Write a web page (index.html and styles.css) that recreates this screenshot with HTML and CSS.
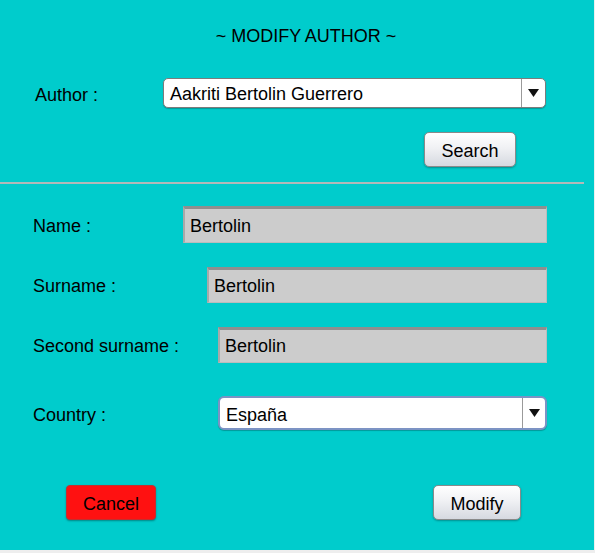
FILE: index.html
```html
<!DOCTYPE html>
<html lang="en">
<head>
<meta charset="utf-8">
<title>Modify author</title>
<link rel="stylesheet" href="styles.css">
</head>
<body>
<div class="frame">
  <div class="title">~ MODIFY AUTHOR ~</div>

  <div class="row row--author">
    <span class="label label--combo">Author :</span>
    <div class="combo combo--author">
      <span class="combo-text">Aakriti Bertolin Guerrero</span>
      <span class="combo-arrow"><svg width="11" height="8" viewBox="0 0 11 8"><polygon points="0,0 11,0 5.5,8" fill="#111"/></svg></span>
    </div>
  </div>

  <div class="row row--search">
    <button class="btn btn--search">Search</button>
  </div>

  <div class="separator"></div>

  <div class="row row--name">
    <span class="label">Name :</span>
    <div class="field field--name">Bertolin</div>
  </div>

  <div class="row row--surname">
    <span class="label">Surname :</span>
    <div class="field field--surname">Bertolin</div>
  </div>

  <div class="row row--second">
    <span class="label">Second surname :</span>
    <div class="field field--second">Bertolin</div>
  </div>

  <div class="row row--country">
    <span class="label label--combo">Country :</span>
    <div class="combo combo--country">
      <span class="combo-text">España</span>
      <span class="combo-arrow"><svg width="11" height="8" viewBox="0 0 11 8"><polygon points="0,0 11,0 5.5,8" fill="#111"/></svg></span>
    </div>
  </div>

  <div class="row row--actions">
    <button class="btn btn--cancel">Cancel</button>
    <button class="btn btn--modify">Modify</button>
  </div>
</div>
</body>
</html>
```

FILE: styles.css
```css
* { box-sizing: border-box; }

html, body {
  margin: 0;
  padding: 0;
}

body {
  background: #eeeeee;
  width: 595px;
  height: 553px;
  overflow: hidden;
  font-family: "Liberation Sans", Arial, sans-serif;
  font-size: 18px;
  color: #000;
}

.frame {
  width: 594px;
  height: 550px;
  background: #00cccc;
  display: flex;
  flex-direction: column;
}

.title {
  padding-top: 26px;
  height: 46px;
  line-height: 20px;
  text-align: center;
  padding-left: 18px;
}

.row {
  display: flex;
  align-items: center;
  padding-left: 33px;
  padding-right: 47px;
}

.label {
  flex: none;
  white-space: nowrap;
  line-height: 20px;
  padding-top: 2px;
}

.label--combo {
  padding-top: 4px;
}

.row--author {
  margin-top: 31px;
  padding-left: 35px;
  padding-right: 48px;
  height: 31px;
}

.combo {
  margin-left: auto;
  display: flex;
  align-items: stretch;
  background: #fff;
  border: 1px solid #7c7c7c;
  border-radius: 5px;
  box-shadow: 0 1px 1px rgba(0, 0, 0, 0.25);
  overflow: hidden;
}

.combo--author {
  width: 383px;
  height: 30px;
}

.combo--country {
  width: 329px;
  height: 34px;
  border: 2px solid #7c93c4;
  border-radius: 6px;
}

.combo-text {
  flex: 1;
  display: flex;
  align-items: center;
  padding-left: 6px;
  padding-top: 3px;
  line-height: 20px;
}

.combo-arrow {
  flex: none;
  width: 24px;
  border-left: 1px solid #9a9a9a;
  display: flex;
  align-items: center;
  justify-content: center;
}

.combo--country .combo-arrow {
  width: 23px;
}

.row--search {
  margin-top: 24px;
  justify-content: flex-end;
  padding-right: 78px;
  height: 35px;
}

.btn {
  font-family: "Liberation Sans", Arial, sans-serif;
  font-size: 18px;
  color: #000;
  height: 35px;
  padding: 3px 0 0;
  border: 1px solid #8a8a8a;
  border-radius: 5px;
  background: linear-gradient(#ffffff, #f0f1f4 45%, #d6d9e0);
  box-shadow: 0 1px 2px rgba(0, 0, 0, 0.3);
}

.btn--search { width: 92px; }

.separator {
  margin-top: 15px;
  width: 584px;
  height: 2px;
  background: #b3b9b9;
}

.field {
  margin-left: auto;
  height: 36px;
  background: #cccccc;
  border-top: 3px solid #8f8f8f;
  border-left: 2px solid #a9a9a9;
  border-right: 1px solid #bcbcbc;
  border-bottom: 1px solid #bcbcbc;
  display: flex;
  align-items: center;
  padding-left: 5px;
  line-height: 20px;
}

.row--name {
  margin-top: 22px;
  height: 37px;
}

.field--name { width: 364px; height: 37px; }

.row--surname {
  margin-top: 24px;
  height: 36px;
}

.field--surname { width: 340px; }

.row--second {
  margin-top: 24px;
  height: 36px;
}

.field--second { width: 329px; }

.row--country {
  margin-top: 33px;
  height: 34px;
}

.row--actions {
  margin-top: 55px;
  height: 35px;
  padding-left: 66px;
  padding-right: 73px;
  justify-content: space-between;
}

.btn--cancel {
  width: 90px;
  background: #ff1111;
  border: 1px solid #c23030;
  border-radius: 4px;
  box-shadow: 0 1px 2px rgba(0, 0, 0, 0.35);
}

.btn--modify { width: 88px; }
```
